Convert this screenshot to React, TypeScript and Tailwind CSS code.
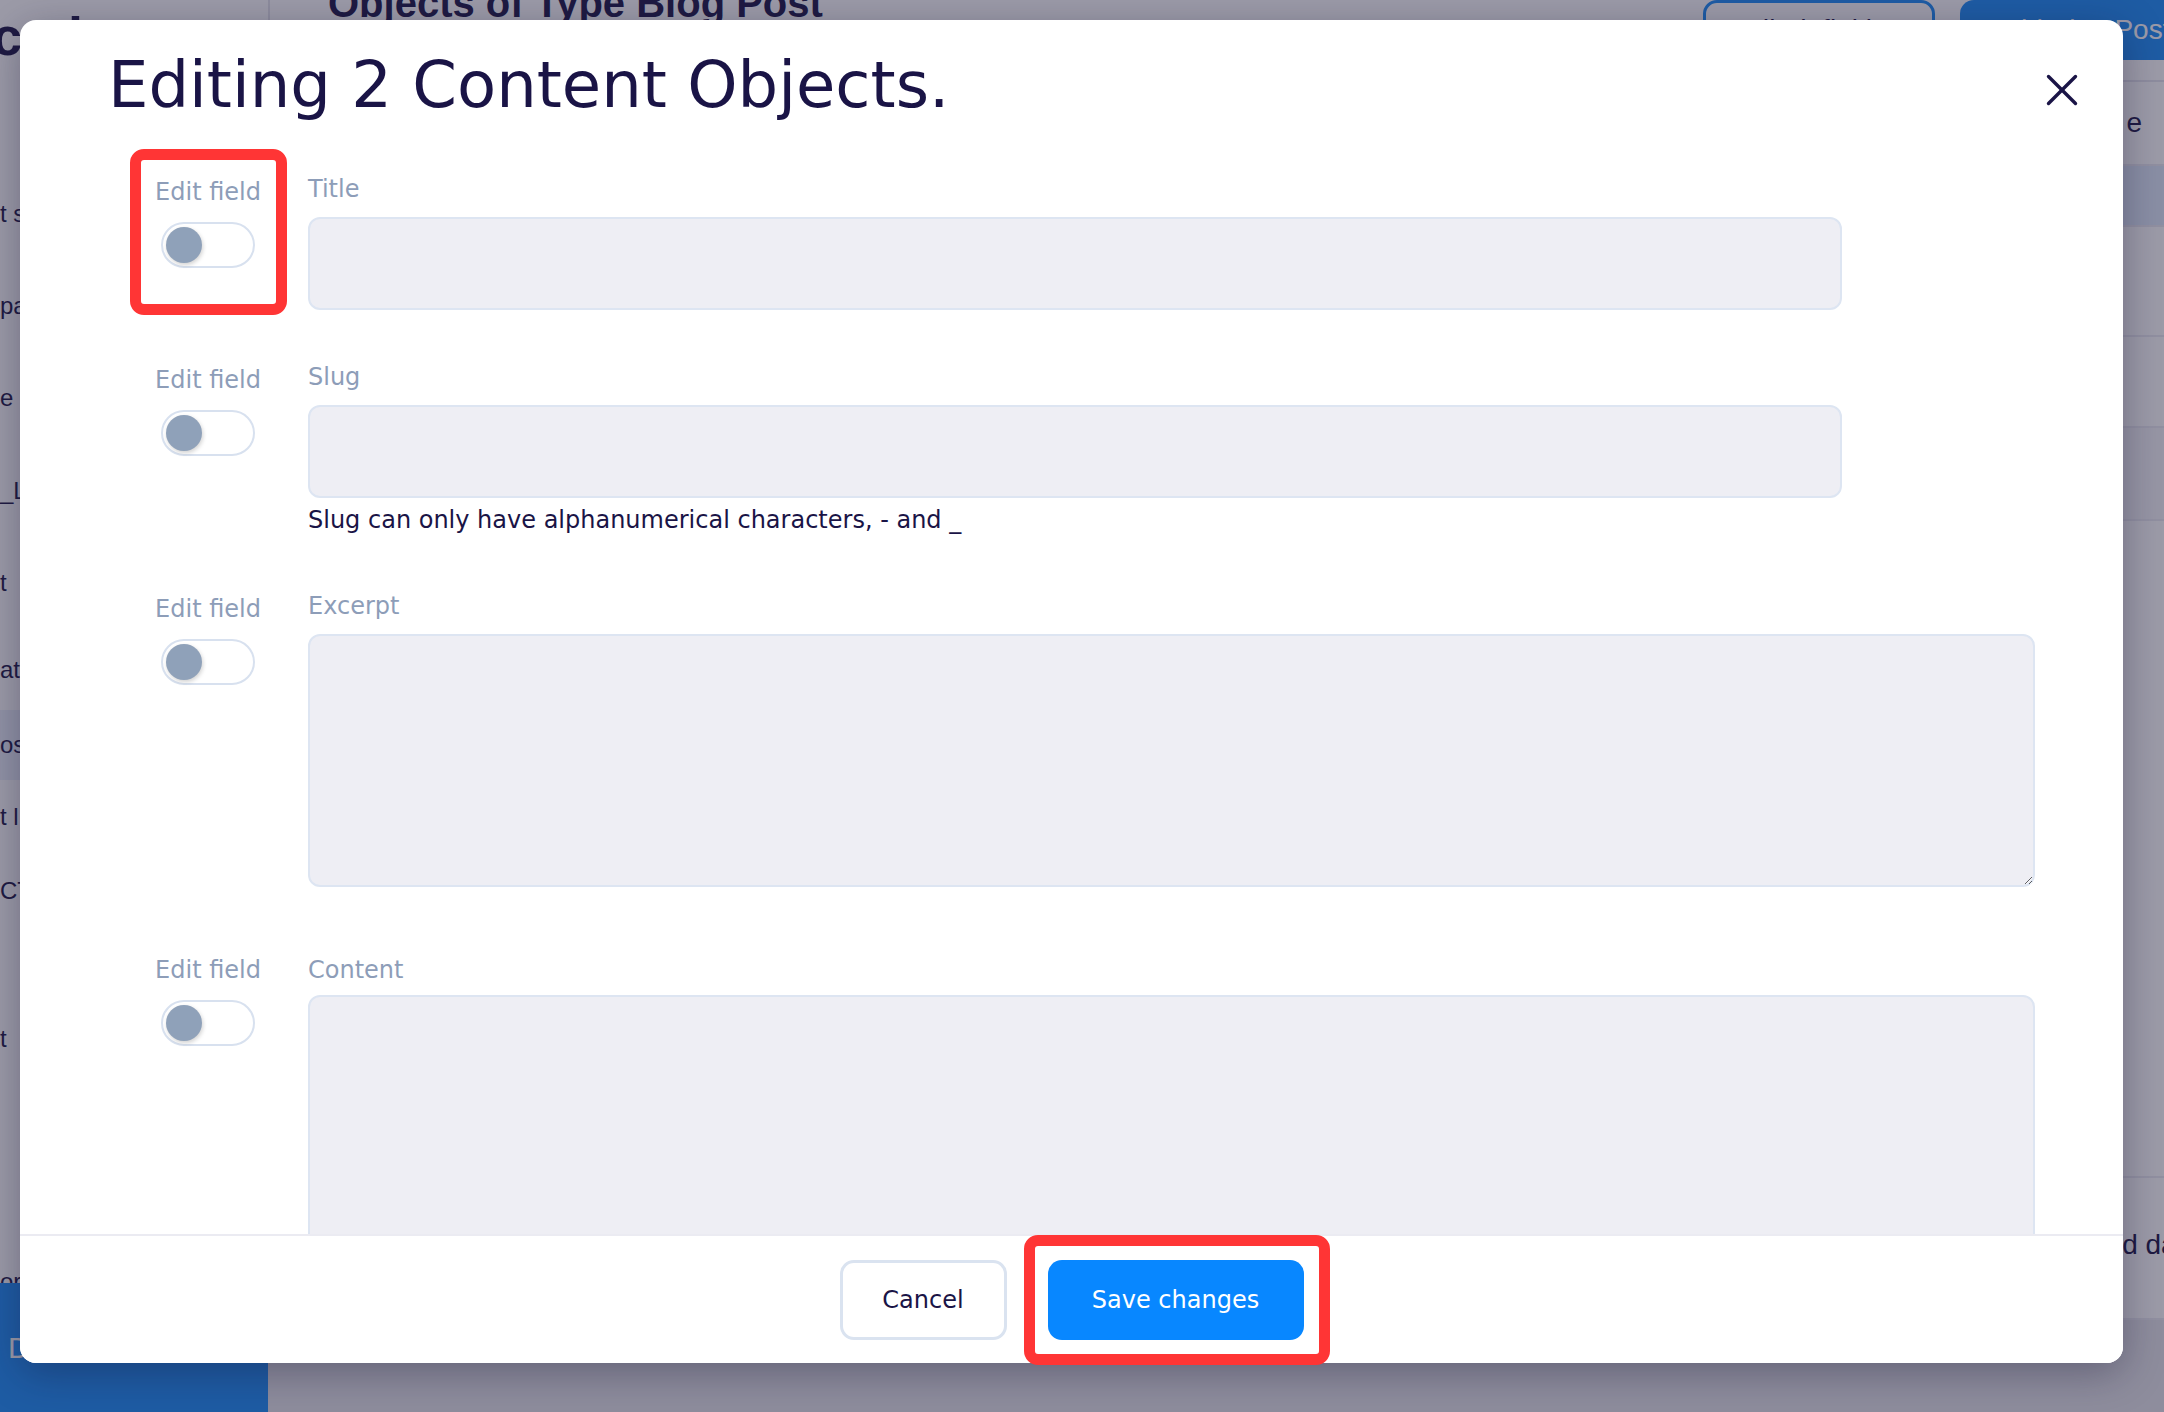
import { X } from "lucide-react";

const navItems = [
  { text: "t s", h: "h-[92px]" },
  { text: "pa", h: "h-[91px]" },
  { text: "e", h: "h-[94px]" },
  { text: "_Li", h: "h-[91px]" },
  { text: "t", h: "h-[94px]" },
  { text: "ate", h: "h-[80px]" },
  { text: "os", h: "h-[70px]", active: true },
  { text: "t l", h: "h-[74px]" },
  { text: "CT", h: "h-[74px]" },
  { text: "", h: "h-[74px]" },
  { text: "t", h: "h-[74px]" },
  { text: "", h: "h-[74px]" },
  { text: "", h: "h-[95px]" },
  { text: "or", h: "h-[74px]" },
];

const tableRows = [
  { h: "h-[84px]", text: "Date", tone: "bg-white" },
  { h: "h-[61px]", text: "", tone: "bg-[#dee9f9]" },
  { h: "h-[110px]", text: "", tone: "bg-white" },
  { h: "h-[91px]", text: "", tone: "bg-white" },
  { h: "h-[93px]", text: "", tone: "bg-[#f6f6f9]" },
  { h: "h-[657px]", text: "", tone: "bg-white" },
  { h: "h-[142px]", text: "Updated date", tone: "bg-white" },
];

function Toggle() {
  return (
    <div className="mt-[14px] flex h-[46px] w-[94px] items-center rounded-full border-2 border-[#d8e1ef] bg-white pl-[3px]">
      <div className="h-[36px] w-[36px] rounded-full bg-[#8fa1b9] shadow-[1px_2px_4px_rgba(0,0,0,0.18)]" />
    </div>
  );
}

function FieldRow({
  label,
  children,
  className,
  tight,
}: {
  label: string;
  children: React.ReactNode;
  className?: string;
  tight?: boolean;
}) {
  return (
    <div className={`flex gap-[48px] ${className ?? ""}`}>
      <div className="flex w-[104px] shrink-0 flex-col items-center pt-[3px]">
        <span className="whitespace-nowrap text-[24px] leading-[32px] text-[#8d9db8]">Edit field</span>
        <Toggle />
      </div>
      <div className="flex min-w-0 flex-1 flex-col">
        <span className={`text-[24px] leading-[31px] text-[#8d9db8] ${tight ? "pt-[4px]" : "pt-[1px]"}`}>{label}</span>
        <div className={tight ? "mt-[9px]" : "mt-[12px]"}>{children}</div>
      </div>
    </div>
  );
}

export default function App() {
  return (
    <div className="relative h-[1412px] w-[2164px] overflow-hidden bg-white font-['Liberation_Sans',Arial,sans-serif]">
      {/* page behind the dialog */}
      <div className="flex h-full w-full">
        <aside className="flex w-[270px] shrink-0 flex-col border-r-2 border-[#e3e3ec] bg-white">
          <div className="h-[168px] pt-[9px] text-[54px] font-bold leading-none text-[#1a1446]">
            <span className="ml-[-8px]">c</span>
            <span className="ml-[46px]">i</span>
          </div>
          <div className="flex h-[1115px] flex-col overflow-hidden">
            {navItems.map((item, i) => (
              <div
                key={i}
                className={`flex shrink-0 items-center text-[24px] text-[#1a1446] ${item.h} ${item.active ? "bg-[#ebf0fb]" : ""}`}
              >
                {item.text}
              </div>
            ))}
          </div>
          <div className="flex flex-1 items-center bg-[#1a8cf8] pl-[8px] text-[30px] text-white">D</div>
        </aside>

        <main className="flex min-w-0 flex-1 flex-col overflow-hidden bg-[#e6e5eb]">
          <header className="mr-[-61px] flex h-[82px] shrink-0 items-start justify-between border-b-2 border-[#e5e5ee] bg-white pl-[58px]">
            <h1 className="mt-[-17px] text-[40px] font-bold leading-none text-[#1a1446]">Objects of Type Blog Post</h1>
            <div className="flex gap-[25px]">
              <button className="h-[60px] w-[232px] rounded-[14px] border-[3px] border-[#1a8cf8] text-[28px] text-[#1a1446]">
                Edit definition
              </button>
              <button className="h-[60px] w-[265px] rounded-[14px] bg-[#1a8cf8] pl-[33px] text-left text-[28px] text-white">
                Add Blog Post
              </button>
            </div>
          </header>
          <div className="flex flex-col">
            {tableRows.map((row, i) => (
              <div
                key={i}
                className={`flex shrink-0 items-center justify-end border-b-2 border-[#ececf2] pr-[22px] text-[28px] text-[#1a1446] ${row.h} ${row.tone}`}
              >
                {i === 0 ? (
                  <span className="whitespace-nowrap">
                    Dat<span className="ml-[6px]">e</span>
                  </span>
                ) : (
                  <span className={i === 6 ? "mr-[-58px] mt-[-6px] whitespace-nowrap" : "whitespace-nowrap"}>{row.text}</span>
                )}
              </div>
            ))}
          </div>
        </main>
      </div>

      {/* dim overlay */}
      <div className="absolute inset-0 bg-[#23213e]/45" />

      {/* dialog */}
      <div className="absolute inset-0 pl-[20px] pt-[20px] font-['DejaVu_Sans',sans-serif]">
        <div className="flex h-[1343px] w-[2103px] flex-col overflow-hidden rounded-2xl bg-white shadow-[0_10px_40px_rgba(20,16,50,0.35)]">
          <div className="flex h-[120px] shrink-0 items-start justify-between pl-[88px] pr-[34px]">
            <h2 className="mt-[33px] text-[64px] font-normal leading-none text-[#1a1446]">Editing 2 Content Objects.</h2>
            <button className="mt-[43px] text-[#1a1446]">
              <X size={54} strokeWidth={1.5} />
            </button>
          </div>

          <div className="flex flex-1 flex-col overflow-hidden pl-[136px] pr-[88px] pt-[33px]">
            <FieldRow label="Title" className="mb-[51px]">
              <div className="h-[93px] w-[1534px] rounded-xl border-2 border-[#dde5f2] bg-[#eeeef4]" />
            </FieldRow>
            <FieldRow label="Slug" className="mb-[56px]">
              <div className="h-[93px] w-[1534px] rounded-xl border-2 border-[#dde5f2] bg-[#eeeef4]" />
              <p className="mt-[8px] text-[24px] leading-[28px] text-[#1a1446]">
                Slug can only have alphanumerical characters, - and _
              </p>
            </FieldRow>
            <FieldRow label="Excerpt" className="mb-[64px]">
              <textarea className="block h-[253px] w-full rounded-xl border-2 border-[#dde5f2] bg-[#eeeef4] outline-none" />
            </FieldRow>
            <FieldRow label="Content" tight>
              <textarea className="block h-[320px] w-full rounded-xl border-2 border-[#dde5f2] bg-[#eeeef4] outline-none" />
            </FieldRow>
          </div>

          <div className="flex h-[129px] shrink-0 items-center justify-center gap-[41px] border-t-2 border-[#ebebf2] bg-white">
            <button className="h-[80px] w-[167px] rounded-[14px] border-[3px] border-[#dae3f0] bg-white text-[24px] text-[#1a1446]">
              Cancel
            </button>
            <button className="h-[80px] w-[256px] rounded-[14px] bg-[#0887ff] text-[24px] text-white">Save changes</button>
          </div>
        </div>
      </div>

      {/* annotation boxes */}
      <div className="pointer-events-none absolute left-[130px] top-[149px] h-[166px] w-[157px] rounded-[14px] border-[11px] border-[#ff3535]" />
      <div className="pointer-events-none absolute left-[1024px] top-[1235px] h-[130px] w-[306px] rounded-[14px] border-[11px] border-[#ff3535]" />
    </div>
  );
}
